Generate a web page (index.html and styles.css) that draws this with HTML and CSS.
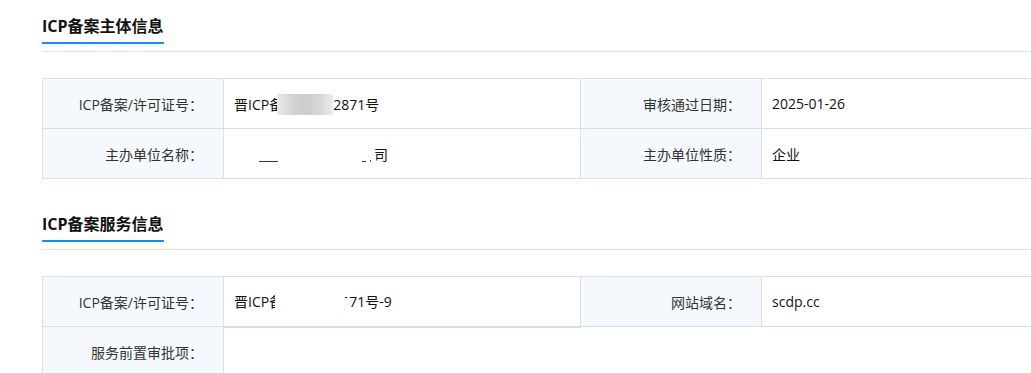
FILE: index.html
```html
<!DOCTYPE html>
<html lang="zh-CN">
<head>
    <meta charset="UTF-8">
    <meta name="viewport" content="width=device-width, initial-scale=1.0">
    <title>ICP备案信息</title>
    <link rel="stylesheet" href="styles.css">
</head>
<body>
    <div class="page">
        <div class="section">
            <div class="section-head">
                <h2 class="section-title">ICP备案主体信息</h2>
            </div>
            <table class="info-table">
                <colgroup>
                    <col class="col-label">
                    <col class="col-value">
                    <col class="col-label">
                    <col class="col-value">
                </colgroup>
                <tr>
                    <th>ICP备案/许可证号：</th>
                    <td>晋ICP<span class="hide">备<span class="mask mask-blur"></span></span><span class="gap w50"></span>2871号</td>
                    <th>审核通过日期：</th>
                    <td>2025-01-26</td>
                </tr>
                <tr>
                    <th>主办单位名称：</th>
                    <td><span class="gap w25"></span><span class="dash w19"></span><span class="gap w84"></span><span class="dash w4"></span><span class="dot"></span>司</td>
                    <th>主办单位性质：</th>
                    <td>企业</td>
                </tr>
            </table>
        </div>

        <div class="section">
            <div class="section-head">
                <h2 class="section-title">ICP备案服务信息</h2>
            </div>
            <table class="info-table">
                <colgroup>
                    <col class="col-label">
                    <col class="col-value">
                    <col class="col-label">
                    <col class="col-value">
                </colgroup>
                <tr>
                    <th>ICP备案/许可证号：</th>
                    <td class="cut-below">晋ICP<span class="hide">备<span class="mask mask-white"></span><span class="mask mask-low"></span></span><span class="gap w50"></span>2871号-9</td>
                    <th>网站域名：</th>
                    <td>scdp.cc</td>
                </tr>
                <tr>
                    <th>服务前置审批项：</th>
                    <td colspan="3"></td>
                </tr>
            </table>
        </div>
    </div>
</body>
</html>
```

FILE: styles.css
```css
html, body {
    overflow: hidden;
}
body {
    margin: 0;
    background: #fff;
    color: #222;
    font-family: "Open Sans", "Noto Sans CJK SC", sans-serif;
    font-size: 14px;
}
.page {
    margin-left: 42px;
    width: 1077px;
}
.section + .section {
    margin-top: 19px;
}
.section-head {
    padding-top: 13px;
    padding-bottom: 7px;
    border-bottom: 1px solid #d9e3ec;
}
.section-title {
    display: inline-block;
    margin: 0;
    padding-bottom: 3px;
    font-size: 16px;
    line-height: 26px;
    font-weight: bold;
    color: #111;
    border-bottom: 2px solid #1a8cf0;
}
.info-table {
    margin-top: 26px;
    width: 1077px;
    table-layout: fixed;
    border-collapse: collapse;
    border: 1px solid #dcdfe4;
}
.col-label {
    width: 181px;
}
.col-value {
    width: 357px;
}
.info-table tr {
    height: 50px;
}
.info-table tr + tr {
    border-top: 1px solid #cfe1f1;
}
.info-table th,
.info-table td {
    padding: 0;
    border-left: 1px solid #dcdfe4;
    vertical-align: middle;
    white-space: nowrap;
}
.info-table th {
    background: #f5f9fd;
    color: #333;
    font-weight: normal;
    text-align: right;
    padding-right: 20px;
}
.info-table td {
    padding-left: 10px;
    color: #111;
}
.info-table td.cut-below {
    border-bottom: 2px solid #cfe1f1;
}

/* masked parts of the record numbers */
.hide {
    position: relative;
}
.mask {
    position: absolute;
    top: -1px;
    bottom: -1px;
}
.mask-blur {
    left: 8px;
    width: 56px;
    background: linear-gradient(90deg, #e9e9e9 0%, #d2d2d2 30%, #cdcdcd 55%, #dadada 80%, #ececec 100%);
}
.mask-white {
    left: 6px;
    width: 70px;
    background: #fff;
}
.mask-low {
    left: 76px;
    width: 5px;
    top: 6px;
    background: #fff;
}
.gap {
    display: inline-block;
}
.w25 { width: 25px; }
.w50 { width: 50px; }
.w84 { width: 84px; }
.dash {
    display: inline-block;
    height: 1px;
    background: #333;
    vertical-align: -2px;
}
.w19 { width: 19px; }
.w4 { width: 4px; margin-right: 4px; }
.dot {
    display: inline-block;
    width: 1px;
    height: 2px;
    margin-right: 3px;
    background: #2a6fb8;
    vertical-align: -2px;
}
```
